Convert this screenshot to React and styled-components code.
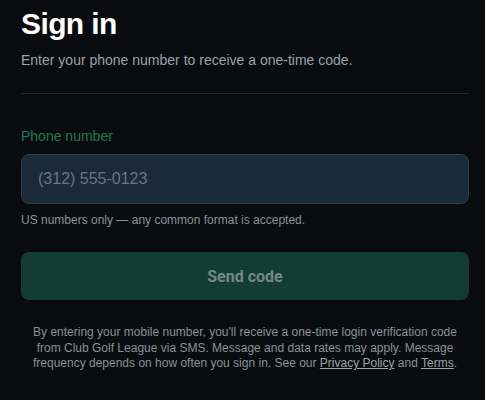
import { styled, createGlobalStyle } from "styled-components";

const GlobalStyle = createGlobalStyle`
  body {
    margin: 0;
    background: #0a0b0e;
    font-family: "Liberation Sans", Arial, sans-serif;
  }
`;

const Page = styled.main`
  display: flex;
  flex-direction: column;
  padding: 6px 16px 0 21px;
`;

const Title = styled.h1`
  margin: 0;
  font-size: 30px;
  line-height: 36px;
  font-weight: 700;
  letter-spacing: -0.02em;
  color: #ffffff;
`;

const Subtitle = styled.p`
  margin: 8px 0 0;
  font-size: 14px;
  line-height: 20px;
  color: #9aa1ab;
`;

const Divider = styled.hr`
  margin: 23px 0 0;
  border: 0;
  height: 1px;
  background: #1b2826;
`;

const Form = styled.form`
  display: flex;
  flex-direction: column;
  margin-top: 32px;
`;

const Label = styled.label`
  font-size: 14px;
  line-height: 20px;
  color: #1d7a4f;
`;

const PhoneInput = styled.input`
  box-sizing: border-box;
  margin-top: 8px;
  height: 50px;
  padding: 0 16px;
  border: 1px solid #1d4741;
  border-radius: 8px;
  background: #1b2a3b;
  color: #e6e9ee;
  font-family: "Liberation Sans", Arial, sans-serif;
  font-size: 16px;
  outline: none;

  &::placeholder {
    color: #6a7583;
  }
`;

const Hint = styled.p`
  margin: 8px 0 0;
  font-size: 12px;
  line-height: 16px;
  color: #8a919a;
`;

const SendButton = styled.button`
  margin-top: 24px;
  height: 48px;
  border: 0;
  border-radius: 8px;
  background: #123d33;
  color: #708981;
  font-family: Roboto, "Liberation Sans", sans-serif;
  font-size: 16px;
  font-weight: 700;
  cursor: not-allowed;
`;

const Legal = styled.p`
  margin: 25px 0 0;
  font-size: 12px;
  line-height: 15.6px;
  text-align: center;
  color: #8b9199;
`;

const LegalLink = styled.a`
  color: #9ea4ab;
  text-decoration: underline;
`;

export default function App() {
  return (
    <>
      <GlobalStyle />
      <Page>
        <Title>Sign in</Title>
        <Subtitle>Enter your phone number to receive a one-time code.</Subtitle>
        <Divider />
        <Form onSubmit={(e) => e.preventDefault()}>
          <Label htmlFor="phone">Phone number</Label>
          <PhoneInput id="phone" type="tel" placeholder="(312) 555-0123" />
          <Hint>US numbers only — any common format is accepted.</Hint>
          <SendButton type="submit" disabled>
            Send code
          </SendButton>
        </Form>
        <Legal>
          By entering your mobile number, you'll receive a one-time login
          verification code from Club Golf League via SMS. Message and data
          rates may apply. Message frequency depends on how often you sign in.
          See our <LegalLink href="#">Privacy Policy</LegalLink> and{" "}
          <LegalLink href="#">Terms</LegalLink>.
        </Legal>
      </Page>
    </>
  );
}
